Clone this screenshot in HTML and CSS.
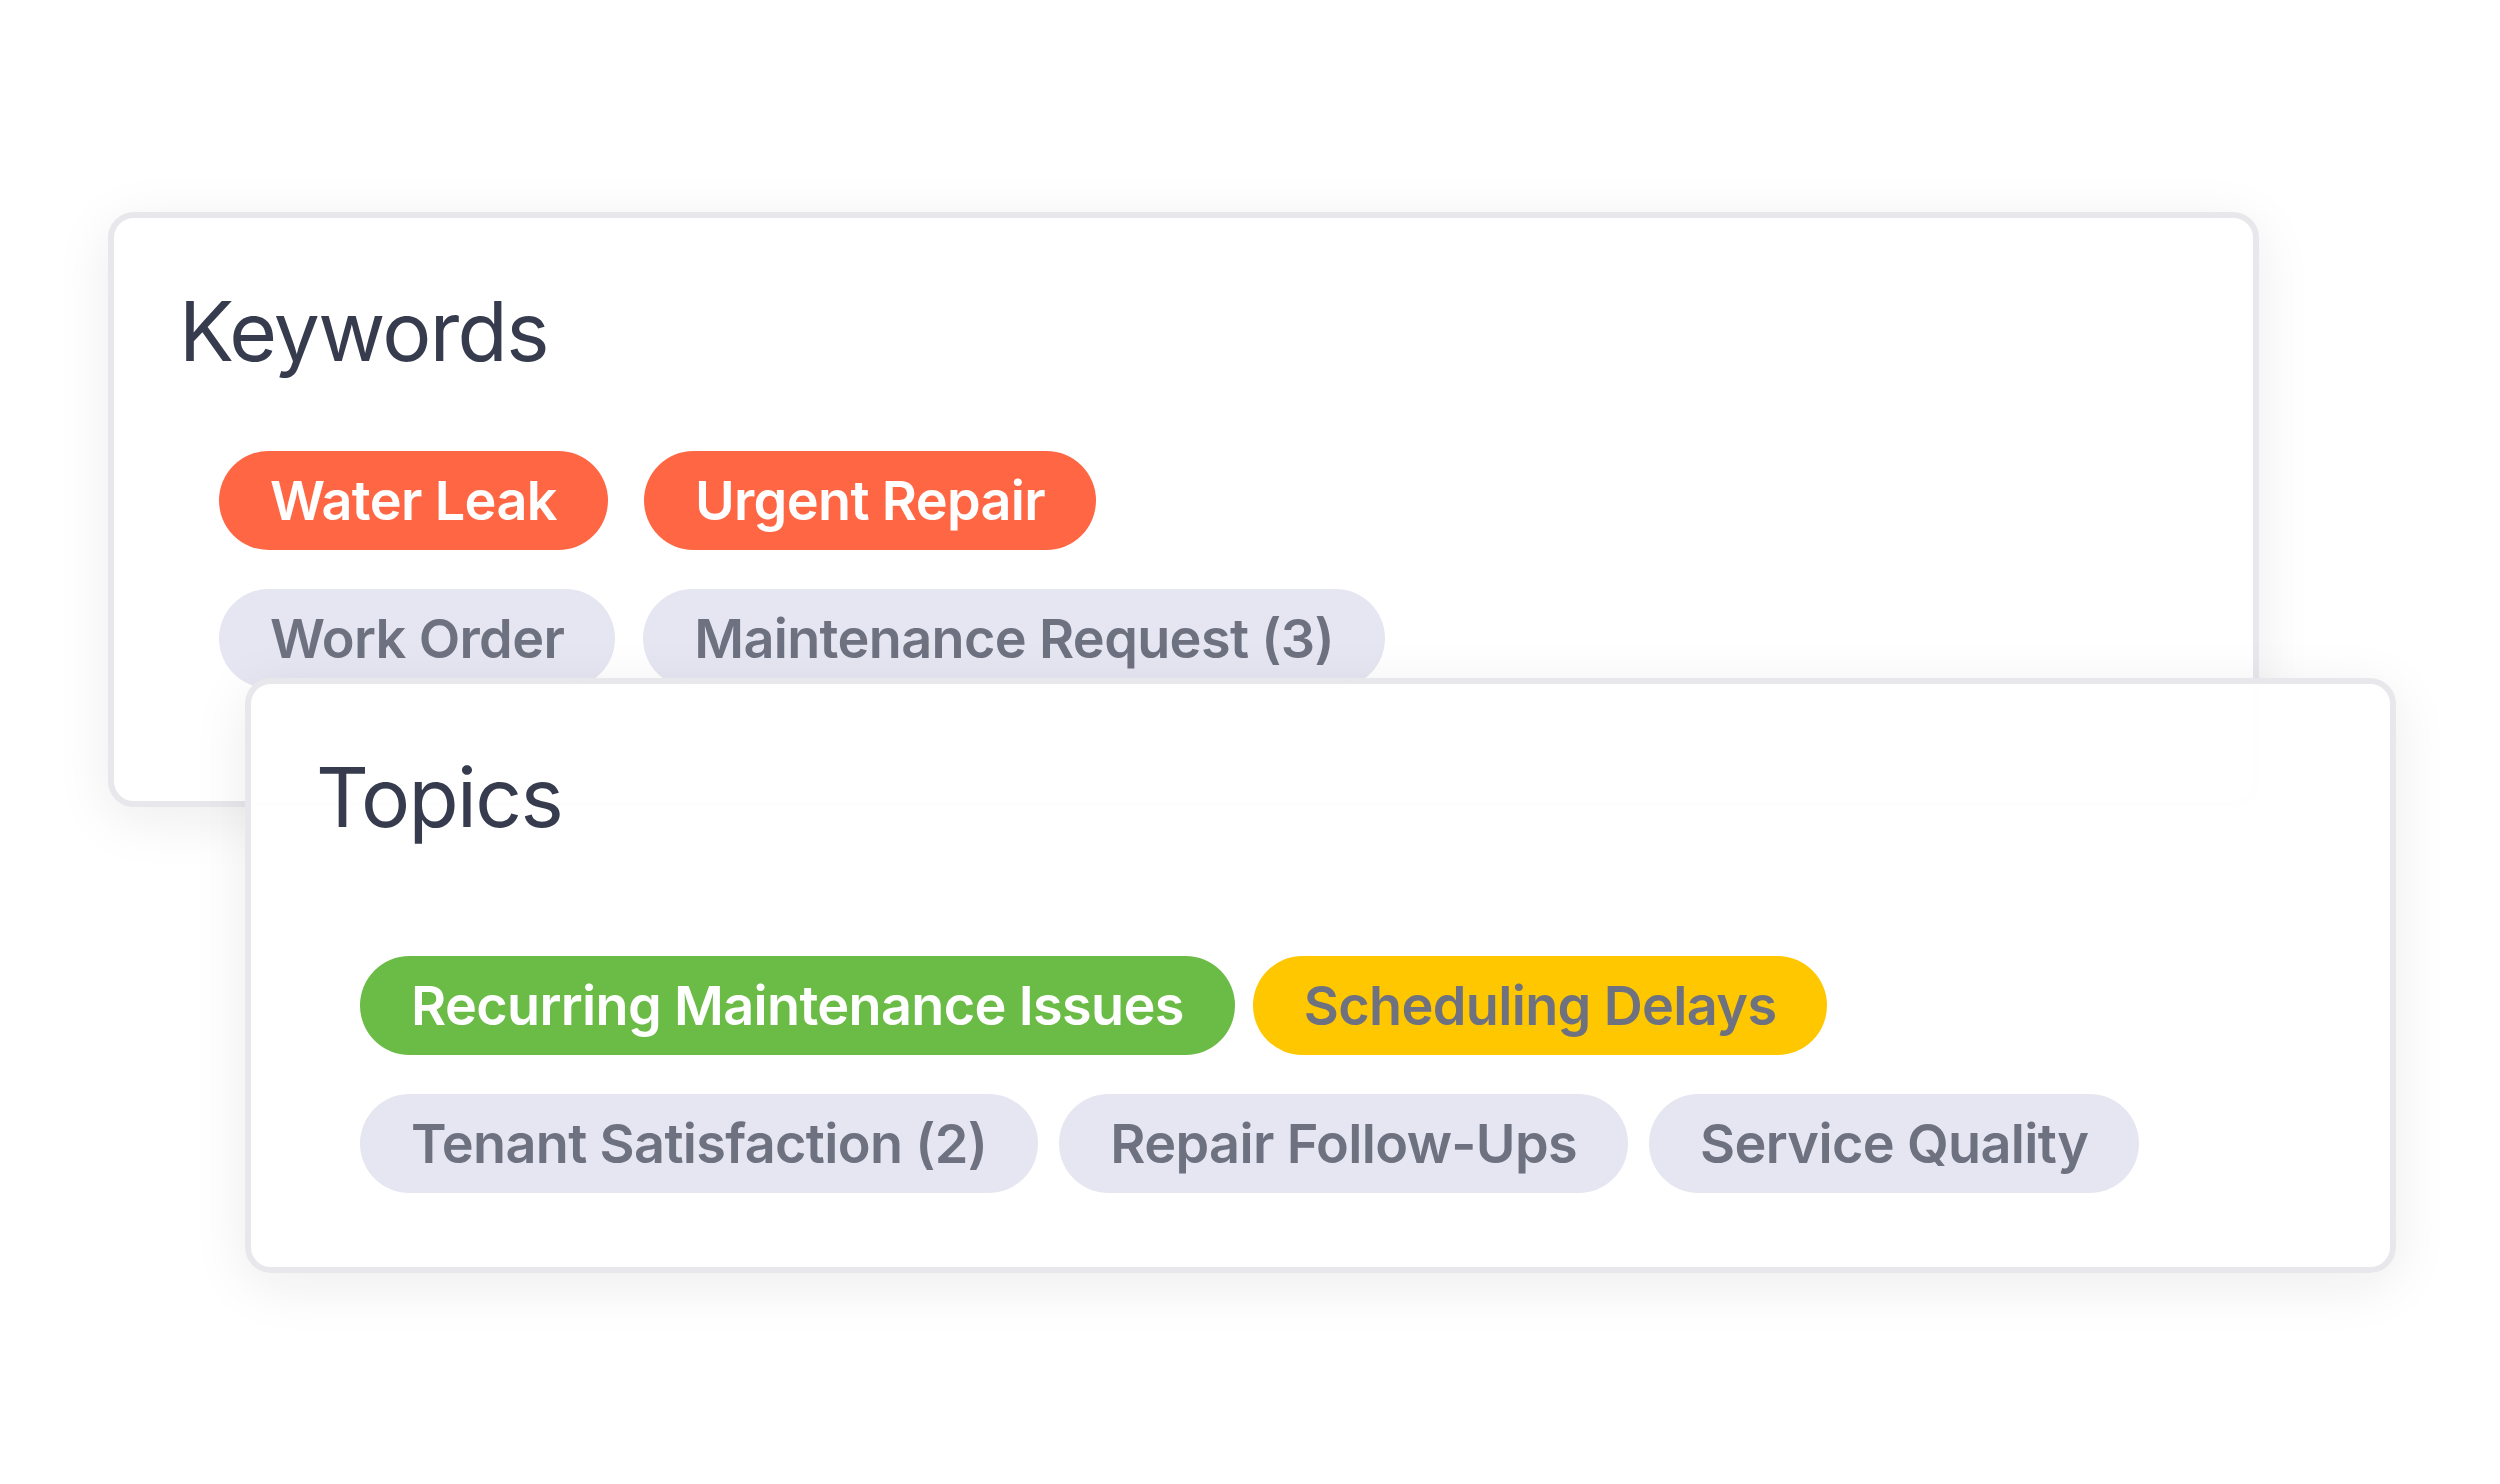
FILE: index.html
```html
<!DOCTYPE html>
<html lang="en">
<head>
<meta charset="utf-8">
<title>Keywords and Topics</title>
<link rel="stylesheet" href="styles.css">
</head>
<body>
<main class="stack">
  <section class="card card-keywords">
    <h2 class="card-title">Keywords</h2>
    <div class="tags tags-keywords">
      <div class="tag-row">
        <span class="tag tag-orange">Water Leak</span>
        <span class="tag tag-orange">Urgent Repair</span>
      </div>
      <div class="tag-row">
        <span class="tag tag-gray">Work Order</span>
        <span class="tag tag-gray">Maintenance Request (3)</span>
      </div>
    </div>
  </section>
  <section class="card card-topics">
    <h2 class="card-title">Topics</h2>
    <div class="tags tags-topics">
      <div class="tag-row">
        <span class="tag tag-green">Recurring Maintenance Issues</span>
        <span class="tag tag-yellow">Scheduling Delays</span>
      </div>
      <div class="tag-row">
        <span class="tag tag-gray">Tenant Satisfaction (2)</span>
        <span class="tag tag-gray">Repair Follow-Ups</span>
        <span class="tag tag-gray">Service Quality</span>
      </div>
    </div>
  </section>
</main>
</body>
</html>
```

FILE: styles.css
```css
* {
  box-sizing: border-box;
}

html, body {
  margin: 0;
  padding: 0;
  background: #ffffff;
}

body {
  font-family: Inter, "Noto Sans", "Liberation Sans", sans-serif;
  width: 2500px;
  height: 1484px;
  overflow: hidden;
}

.stack {
  display: grid;
  padding: 212px 0 0 108px;
}

.card {
  grid-area: 1 / 1;
  width: 2151px;
  height: 595px;
  border: 6px solid #e8e7eb;
  border-radius: 26px;
  background: #ffffff;
  box-shadow: 0 12px 56px rgba(20, 20, 40, 0.08);
  padding: 73px 0 0 65px;
}

.card-topics {
  margin: 466px 0 0 137px;
  background: rgba(255, 255, 255, 0.94);
}

.card-title {
  margin: 0;
  font-size: 82px;
  line-height: 1;
  font-weight: 400;
  color: #373b4e;
  letter-spacing: -0.02em;
}

.tags {
  display: flex;
  flex-direction: column;
  gap: 39px;
}

.tag-row {
  display: flex;
}

.tags-keywords {
  margin: 78px 0 0 40px;
}

.tags-keywords .tag-row {
  gap: 36px;
}

.tags-keywords .tag-row + .tag-row {
  gap: 28px;
}

.tags-topics {
  margin: 117px 0 0 44px;
}

.tags-topics .tag-row {
  gap: 18px;
}

.tags-topics .tag-row + .tag-row {
  gap: 21px;
}

.tag {
  display: inline-flex;
  align-items: center;
  height: 99px;
  padding: 0 51px;
  border-radius: 50px;
  font-size: 54px;
  font-weight: 600;
  white-space: nowrap;
  letter-spacing: -0.012em;
}

.tag-orange {
  background: #ff6644;
  color: #ffffff;
}

.tag-gray {
  background: #e6e6f2;
  color: #6e7180;
}

.tag-green {
  background: #6bbb47;
  color: #ffffff;
}

.tag-yellow {
  background: #ffc700;
  color: #6e7180;
}
```
